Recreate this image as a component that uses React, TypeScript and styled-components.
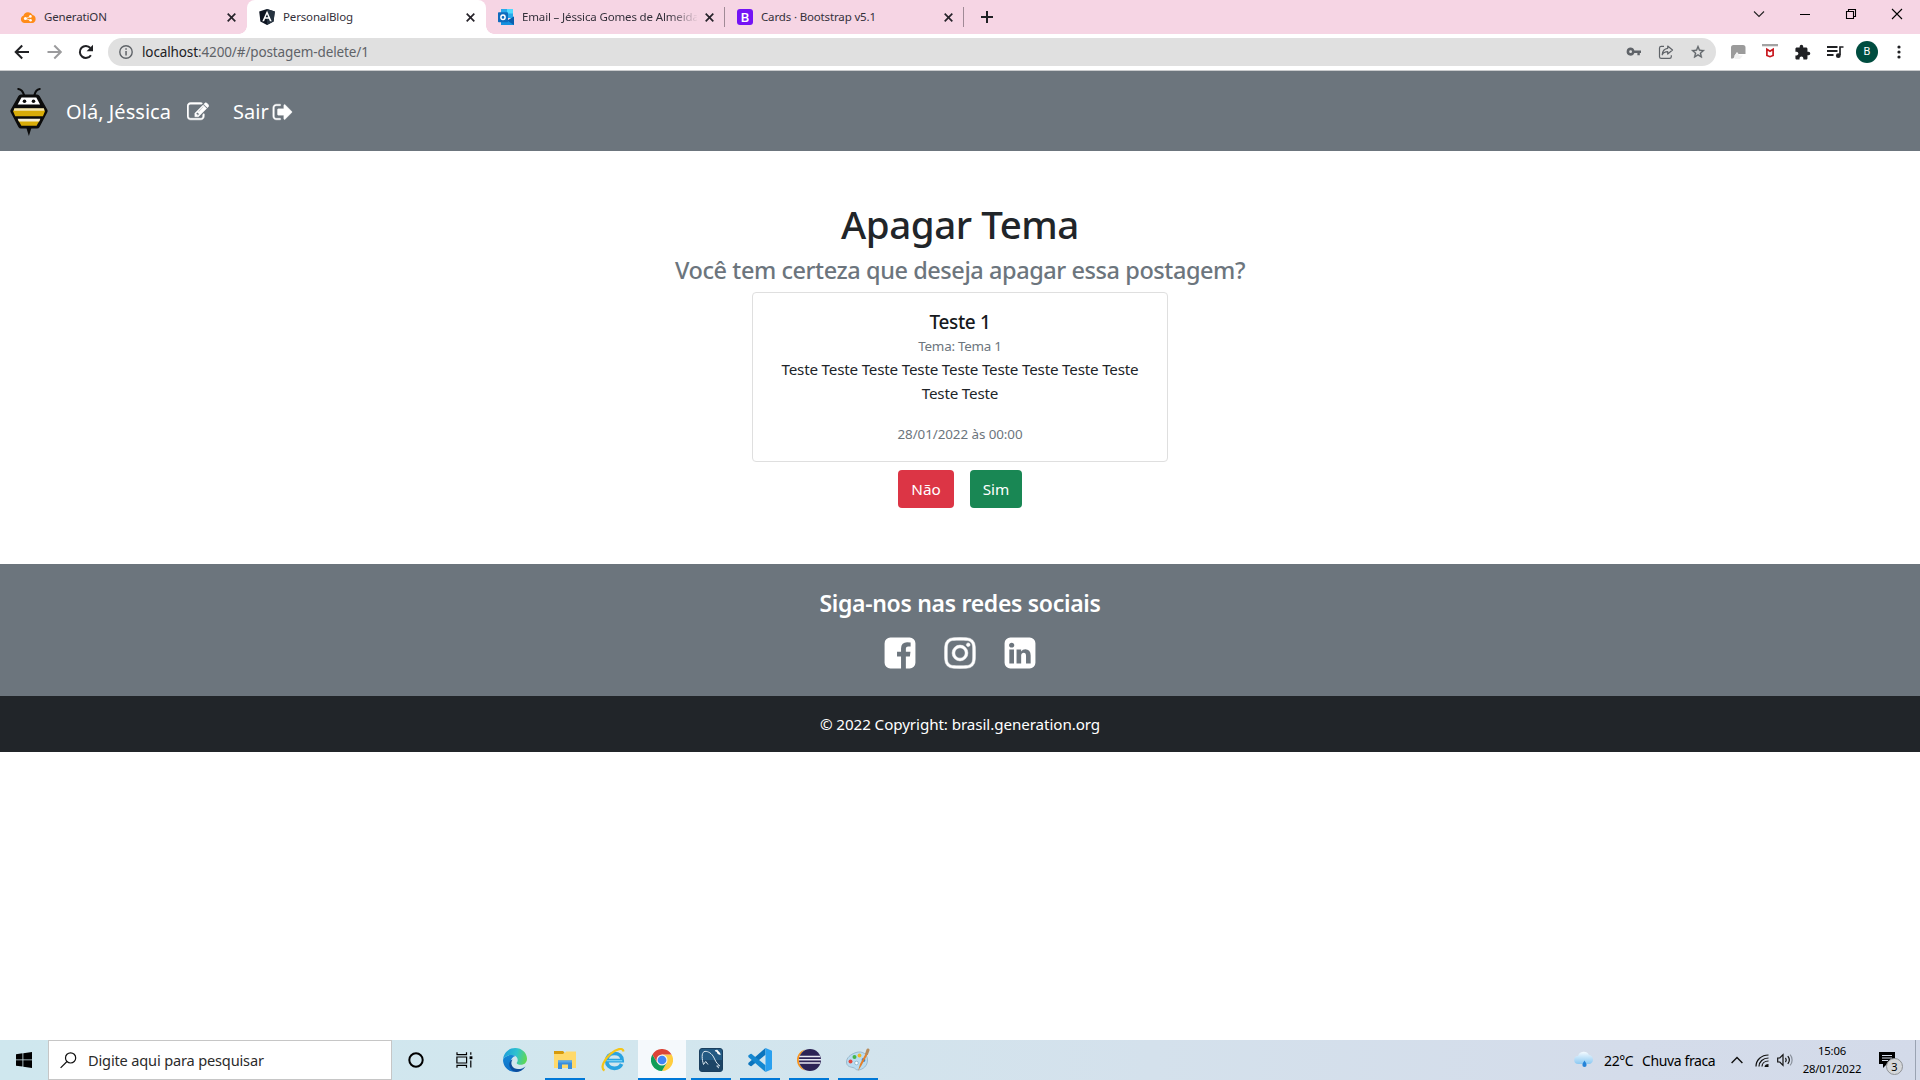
import React from "react";
import styled, { createGlobalStyle } from "styled-components";

const sans = `"Noto Sans", "Open Sans", "Liberation Sans", sans-serif`;

const GlobalStyle = createGlobalStyle`
  * { box-sizing: border-box; }
  html, body { margin: 0; padding: 0; }
  body { background: #fff; font-family: ${sans}; color: #212529; overflow: hidden; }
  h1, h2, h3, p { margin: 0; }
  svg { display: block; flex: none; }
`;

const Screen = styled.div`
  width: 1920px;
  height: 1080px;
  display: flex;
  flex-direction: column;
  background: #fff;
`;

/* ---------- browser chrome ---------- */

const TabStrip = styled.div`
  height: 34px;
  display: flex;
  background: #f6d5e4;
  padding-left: 8px;
`;

const Tab = styled.div<{ $active?: boolean; $divider?: boolean }>`
  position: relative;
  width: 239px;
  height: 34px;
  display: flex;
  align-items: center;
  padding: 0 11px 0 12px;
  background: ${(p) => (p.$active ? "#fff" : "transparent")};
  border-radius: 8px 8px 0 0;
  ${(p) =>
    p.$active &&
    `
    &::before, &::after {
      content: "";
      position: absolute;
      bottom: 0;
      width: 8px;
      height: 8px;
    }
    &::before { left: -8px; background: radial-gradient(circle at 0 0, transparent 7.5px, #fff 8px); }
    &::after { right: -8px; background: radial-gradient(circle at 100% 0, transparent 7.5px, #fff 8px); }
  `}
  ${(p) =>
    p.$divider &&
    `
    &::after {
      content: "";
      position: absolute;
      right: 0;
      top: 7px;
      width: 1px;
      height: 20px;
      background: #a08a96;
    }
  `}
`;

const TabTitle = styled.span<{ $fade?: boolean }>`
  flex: 1;
  margin-left: 8px;
  margin-right: 8px;
  font-size: 11.5px;
  line-height: 16px;
  letter-spacing: -0.15px;
  color: #33303a;
  white-space: nowrap;
  overflow: hidden;
  ${(p) => p.$fade && `mask-image: linear-gradient(90deg, #000 84%, transparent 101%);`}
`;

const NewTab = styled.div`
  padding: 11px 0 0 17px;
`;

const WindowControls = styled.div`
  margin-left: auto;
  display: flex;
  height: 28px;
  align-items: center;
  gap: 34px;
  padding-right: 17px;
`;

const Toolbar = styled.div`
  height: 37px;
  display: flex;
  align-items: center;
  padding-left: 12px;
  border-bottom: 1px solid #c9cbcd;
`;

const NavButtons = styled.div`
  width: 96px;
  display: flex;
  gap: 13px;
`;

const AddressBar = styled.div`
  width: 1608px;
  height: 28px;
  border-radius: 14px;
  background: #e0e0e0;
  display: flex;
  align-items: center;
  padding: 0 10px 0 11px;
`;

const Url = styled.span`
  flex: 1;
  margin-left: 9px;
  font-size: 13.5px;
  line-height: 20px;
  letter-spacing: -0.12px;
  color: #5f6368;
  b { font-weight: 400; color: #202124; }
`;

const PillIcons = styled.div`
  display: flex;
  align-items: center;
  gap: 16px;
`;

const Extensions = styled.div`
  display: flex;
  align-items: center;
  margin-left: 14px;
  gap: 16px;
`;

const Avatar = styled.div`
  width: 22px;
  height: 22px;
  border-radius: 50%;
  background: #004d40;
  color: #fff;
  font: 11px/22px Roboto, sans-serif;
  text-align: center;
  margin: 0 3px 0 -4px;
`;

/* ---------- blog page ---------- */

const Navbar = styled.header`
  height: 80px;
  background: #6c757d;
  display: flex;
  align-items: center;
  padding: 1px 0 0 10px;
  color: #fff;
`;

const NavLink = styled.span<{ $left: number; $width: number }>`
  margin-left: ${(p) => p.$left}px;
  width: ${(p) => p.$width}px;
  font-size: 20px;
  line-height: 30px;
  letter-spacing: 0.05px;
  white-space: nowrap;
`;

const NavIcon = styled.span<{ $left: number }>`
  margin-left: ${(p) => p.$left}px;
`;

const Main = styled.main`
  height: 413px;
  padding-top: 49px;
  display: flex;
  flex-direction: column;
  align-items: center;
  text-align: center;
`;

const Title = styled.h1`
  font-size: 38.5px;
  line-height: 48px;
  font-weight: 500;
  letter-spacing: -0.45px;
  margin-bottom: 5px;
`;

const Subtitle = styled.h2`
  font-size: 23.5px;
  line-height: 34px;
  font-weight: 500;
  letter-spacing: -0.43px;
  color: #6c757d;
  margin-bottom: 5px;
`;

const Card = styled.article`
  width: 416px;
  height: 170px;
  border: 1px solid #dfdfdf;
  border-radius: 4px;
  padding: 17px 16px 0;
`;

const CardTitle = styled.h3`
  font-size: 19px;
  line-height: 24px;
  font-weight: 500;
  letter-spacing: -0.35px;
  color: #16191d;
`;

const CardMeta = styled.p<{ $top?: number; $spacing: number }>`
  font-size: 13.4px;
  line-height: 24px;
  letter-spacing: ${(p) => p.$spacing}px;
  color: #6c757d;
  margin-top: ${(p) => p.$top ?? 0}px;
`;

const CardText = styled.p`
  font-size: 15.2px;
  line-height: 24px;
  letter-spacing: -0.19px;
  margin-top: -1px;
`;

const Actions = styled.div`
  display: flex;
  gap: 16px;
  margin-top: 8px;
`;

const Button = styled.button<{ $color: string; $width: number }>`
  width: ${(p) => p.$width}px;
  height: 38px;
  border: 0;
  border-radius: 4px;
  padding: 0;
  background: ${(p) => p.$color};
  color: #fff;
  font-family: inherit;
  font-size: 15.3px;
  line-height: 24px;
`;

const Social = styled.footer`
  height: 132px;
  background: #6c757d;
  color: #fff;
  display: flex;
  flex-direction: column;
  align-items: center;
  padding-top: 22px;
`;

const SocialTitle = styled.h3`
  font-size: 23px;
  line-height: 34px;
  font-weight: 600;
  letter-spacing: -0.3px;
`;

const SocialIcons = styled.div`
  display: flex;
  gap: 24px;
  margin-top: 15px;
`;

const Copyright = styled.div`
  height: 56px;
  background: #212529;
  color: #fff;
  font-size: 15.2px;
  line-height: 56px;
  letter-spacing: -0.08px;
  text-align: center;
`;

/* ---------- taskbar ---------- */

const Taskbar = styled.div`
  margin-top: auto;
  height: 40px;
  display: flex;
  background: linear-gradient(90deg, #cfe7ee 0%, #d2e6ee 35%, #d4e1ec 60%, #d4dcea 85%, #d3dae9 100%);
`;

const TaskCell = styled.div<{ $width: number; $line?: number; $active?: boolean }>`
  width: ${(p) => p.$width}px;
  height: 40px;
  display: flex;
  align-items: center;
  justify-content: center;
  background: ${(p) => (p.$active ? "#f5f9fc" : "transparent")};
  background-image: ${(p) => (p.$line ? "linear-gradient(#0078d7, #0078d7)" : "none")};
  background-size: ${(p) => p.$line ?? 0}px 2px;
  background-position: center bottom;
  background-repeat: no-repeat;
`;

const SearchBox = styled.div`
  width: 344px;
  height: 40px;
  background: #fff;
  border: 1px solid #c6c6c6;
  display: flex;
  align-items: center;
  padding-left: 11px;
  gap: 11px;
  font-size: 14.6px;
  letter-spacing: -0.17px;
  color: #2b2b2b;
`;

const Tray = styled.div`
  margin-left: auto;
  height: 40px;
  display: flex;
  align-items: center;
  color: #000;
`;

const TrayText = styled.span<{ $left: number; $width: number }>`
  margin-left: ${(p) => p.$left}px;
  width: ${(p) => p.$width}px;
  padding-top: 1px;
  font-size: 14px;
  line-height: 20px;
  letter-spacing: -0.38px;
  white-space: nowrap;
`;

const TrayIcon = styled.span<{ $left: number }>`
  margin-left: ${(p) => p.$left}px;
`;

const Clock = styled.div`
  margin-left: 6px;
  width: 64px;
  font-size: 11.3px;
  line-height: 18px;
  letter-spacing: -0.15px;
  text-align: center;
`;

const Notifications = styled.div`
  position: relative;
  margin-left: 15px;
  width: 36px;
`;

const Badge = styled.span`
  position: absolute;
  left: 7px;
  top: 6px;
  width: 17px;
  height: 17px;
  border-radius: 50%;
  border: 1px solid #8f9296;
  background: #d5d7da;
  font-size: 11px;
  line-height: 15px;
  text-align: center;
`;

const ShowDesktop = styled.span`
  width: 5px;
  height: 40px;
  border-left: 1px solid #9aa3b2;
`;

/* ---------- icons ---------- */

const CloseIcon = () => (
  <svg width="9" height="9" viewBox="0 0 9 9" stroke="#26232a" strokeWidth="1.7" fill="none">
    <path d="M.7.7l7.6 7.6M8.3.7L.7 8.3" />
  </svg>
);

const CloudIcon = () => (
  <svg width="16" height="16" viewBox="0 0 16 16">
    <path d="M4 14a3.8 3.8 0 0 1-.6-7.3A5 5 0 0 1 12.6 6 4.1 4.1 0 0 1 12.2 14z" fill="#ff8c1a" />
    <path d="M5.6 9.6l4.6-2M5.6 9.6l4.8 1.6" stroke="#ffe0bb" strokeWidth="1" />
    <circle cx="5.4" cy="9.6" r="1.5" fill="#fff" />
    <circle cx="10.4" cy="7.4" r="1.3" fill="#fff" />
    <circle cx="10.6" cy="11.3" r="1.2" fill="#fff" />
  </svg>
);

const AngularIcon = () => (
  <svg width="16" height="16" viewBox="0 0 16 16">
    <path d="M8 0l7.8 2.6-1.2 9.8L8 16l-6.6-3.6L.2 2.6z" fill="#0d1420" />
    <path d="M8 0l7.8 2.6-1.2 9.8L8 16z" fill="#263340" />
    <path d="M8 1.8L3.3 12.2h1.8l1-2.4h3.8l1 2.4h1.8zM8 5.2l1.3 3.1H6.7z" fill="#fff" fillRule="evenodd" />
  </svg>
);

const OutlookIcon = () => (
  <svg width="16" height="16" viewBox="0 0 16 16">
    <path d="M3 0h12v9H3z" fill="#28a8ea" />
    <path d="M9 0h6v4.5H9z" fill="#50d9ff" />
    <path d="M4 4h5.5v5H4z" fill="#0364b8" />
    <path d="M3 8.5l6.5 3L16 7.5V16H3z" fill="#1490df" />
    <path d="M16 7.5V16L9.5 11.6z" fill="#0a5fae" />
    <rect y="3.2" width="10" height="10" rx=".8" fill="#0f6cbd" />
    <ellipse cx="5" cy="8.2" rx="2.1" ry="2.3" fill="none" stroke="#fff" strokeWidth="1.5" />
  </svg>
);

const BootstrapBadge = styled.span`
  width: 16px;
  height: 16px;
  border-radius: 3px;
  background: #7413f5;
  color: #fff;
  font: 500 13.5px/16px Roboto, sans-serif;
  text-align: center;
`;

const ArrowIcon = ({ color, flip }: { color: string; flip?: boolean }) => (
  <svg width="20" height="16" viewBox="0 0 20 16" fill="none" stroke={color} strokeWidth="2">
    <path d={flip ? "M2.500 8h13M9.300 1.500L15.800 8l-6.500 6.500" : "M17 8H4M10.200 1.500L3.700 8l6.500 6.500"} />
  </svg>
);

const ReloadIcon = () => (
  <svg width="16" height="16" viewBox="0 0 16 16">
    <path d="M12.9 11.200A6 6 0 1 1 12.400 4" fill="none" stroke="#202124" strokeWidth="2" />
    <path d="M15 .8v6.400H8.600z" fill="#202124" />
  </svg>
);

const InfoIcon = () => (
  <svg width="14" height="14" viewBox="0 0 14 14">
    <circle cx="7" cy="7" r="6.200" fill="none" stroke="#5f6368" strokeWidth="1.400" />
    <path d="M6.300 3.200h1.500v1.500H6.300zM6.300 6h1.500v4.600H6.300z" fill="#5f6368" />
  </svg>
);

const KeyIcon = () => (
  <svg width="16" height="12" viewBox="0 0 16 12">
    <path
      d="M4.600 1.600a4 4 0 1 0 3.800 5.300h3v2.400h2.400V6.900H15V4.500H8.400a4 4 0 0 0-3.800-2.900zm0 2.700a1.400 1.400 0 1 1 0 2.800 1.400 1.400 0 0 1 0-2.800z"
      fill="#5f6368"
      fillRule="evenodd"
    />
  </svg>
);

const ShareIcon = () => (
  <svg width="16" height="16" viewBox="0 0 16 16" fill="none" stroke="#5f6368" strokeWidth="1.200">
    <path d="M6 2.400H3.200A1.700 1.700 0 0 0 1.500 4v8.800a1.700 1.700 0 0 0 1.700 1.600h8.400a1.700 1.700 0 0 0 1.700-1.600v-1.600" />
    <path d="M9.700 2l4.800 4-4.800 4V7.600C7 7.600 5.300 8.500 4.200 10.800 4.500 7 6.400 4.600 9.700 4.300z" strokeLinejoin="round" />
  </svg>
);

const StarIcon = () => (
  <svg width="16" height="16" viewBox="0 0 24 24">
    <path
      d="M22 9.240l-7.190-.620L12 2 9.190 8.630 2 9.240l5.460 4.730L5.820 21 12 17.270 18.180 21l-1.630-7.030L22 9.240zM12 15.400l-3.760 2.270 1-4.280-3.320-2.880 4.380-.380L12 6.100l1.710 4.040 4.380.380-3.320 2.880 1 4.280L12 15.400z"
      fill="#5f6368"
      stroke="#5f6368"
      strokeWidth=".5"
    />
  </svg>
);

const ReaderIcon = () => (
  <svg width="16" height="16" viewBox="0 0 16 16">
    <path d="M3.500 1H13a2.500 2.500 0 0 1 2.500 2.500V10H8.500L7 8l-2.500 3.500V13L3 14.500H1v-11A2.500 2.500 0 0 1 3.500 1z" fill="#9b9b9b" />
    <path d="M4.500 15v-3L7 8.500l2.500 3H13L10 15z" fill="#f1f1f1" />
  </svg>
);

const McAfeeIcon = () => (
  <svg width="16" height="16" viewBox="0 0 16 16">
    <path d="M0 0h16v2.300H0z" fill="#a2a2a2" />
    <path d="M4.900 5.300v6.200l3.100 1.200 3.100-1.200V5.300L8 7.300z" fill="none" stroke="#c8161d" strokeWidth="1.700" />
  </svg>
);

const PuzzleIcon = () => (
  <svg width="17" height="17" viewBox="0 0 24 24">
    <path
      d="M20.500 11H19V7c0-1.100-.9-2-2-2h-4V3.500a2.500 2.500 0 0 0-5 0V5H4c-1.100 0-1.990.9-1.990 2v3.800H3.500c1.490 0 2.700 1.210 2.700 2.700s-1.210 2.700-2.700 2.700H2V20c0 1.100.9 2 2 2h3.800v-1.500c0-1.490 1.210-2.700 2.700-2.700s2.700 1.210 2.700 2.700V22H17c1.100 0 2-.9 2-2v-4h1.500a2.500 2.500 0 0 0 0-5z"
      fill="#202124"
    />
  </svg>
);

const QueueIcon = () => (
  <svg width="17" height="16" viewBox="0 0 17 16">
    <path d="M0 3h10.500M0 7h10.500M0 11h6.500" stroke="#202124" strokeWidth="1.800" />
    <path d="M16.500 3H13v8" fill="none" stroke="#202124" strokeWidth="1.700" />
    <circle cx="11.300" cy="11.700" r="2.400" fill="#202124" />
  </svg>
);

const DotsIcon = () => (
  <svg width="4" height="14" viewBox="0 0 4 14" fill="#202124">
    <circle cx="2" cy="2" r="1.600" />
    <circle cx="2" cy="7" r="1.600" />
    <circle cx="2" cy="12" r="1.600" />
  </svg>
);

const BeeLogo = () => (
  <svg width="38" height="50" viewBox="0 0 38 50">
    <g fill="none" stroke="#0b0b0b" strokeWidth="2.200" strokeLinecap="round">
      <path d="M14 8C13 4.500 11.500 2.500 8.300 2M24.500 8c.8-3.500 2.200-5.500 5.200-6" />
    </g>
    <path d="M18.900 49l-2.800-9h5.600z" fill="#0b0b0b" />
    <path d="M11 7.500h16a3 3 0 0 1 2.600 1.500l7.600 13.500a3 3 0 0 1 0 3L29.600 40a3 3 0 0 1-2.600 1.500H11A3 3 0 0 1 8.400 40L.8 25.500a3 3 0 0 1 0-3L8.400 9A3 3 0 0 1 11 7.500z" fill="#0b0b0b" />
    <path d="M11.500 10.500h14.800l3.800 7H7.700z" fill="#fff" />
    <path d="M4.300 21.700h29.600l1 2.800-2 4.700H5.200l-2-4.700z" fill="#d9ac08" />
    <path d="M4.300 21.200h29.600l.5 2.500H3.700z" fill="#f3e6b0" />
    <path d="M7.700 32.300h22.600l-3.700 6.500H11.400z" fill="#d9ac08" />
    <path d="M7.700 31.800h22.600l-1.100 2.600H8.800z" fill="#f6efd5" />
    <circle cx="14.500" cy="14.200" r="1.800" fill="#0b0b0b" />
    <circle cx="23.500" cy="14.200" r="1.800" fill="#0b0b0b" />
  </svg>
);

const glyphs = {
  edit: "M888 1184l116-116-152-152-116 116v56h96v96h56zm440-720q-16-16-33 1l-350 350q-17 17-1 33t33-1l350-350q17-17 1-33zm80 594v190q0 119-84.500 203.500t-203.500 84.500h-832q-119 0-203.500-84.500t-84.500-203.500v-832q0-119 84.500-203.500t203.500-84.500h832q63 0 117 25 15 7 18 23 3 17-9 29l-49 49q-14 14-32 8-23-6-45-6h-832q-66 0-113 47t-47 113v832q0 66 47 113t113 47h832q66 0 113-47t47-113v-126q0-13 9-22l64-64q15-15 35-7t20 29zm-96-738l288 288-672 672h-288v-288zm444 132l-92 92-288-288 92-92q28-28 68-28t68 28l152 152q28 28 28 68t-28 68z",
  signOut:
    "M704 1440q0 4 1 20t.5 26.500-3 23.500-10 19.500-20.500 6.500h-320q-119 0-203.500-84.500t-84.500-203.500v-704q0-119 84.500-203.500t203.500-84.500h320q13 0 22.500 9.500t9.500 22.500q0 4 1 20t.5 26.500-3 23.500-10 19.500-20.500 6.500h-320q-66 0-113 47t-47 113v704q0 66 47 113t113 47h312l11.500 1 11.500 3 8 5.500 7 9 2 13.500zm928-544q0 26-19 45l-544 544q-19 19-45 19t-45-19-19-45v-288h-448q-26 0-45-19t-19-45v-384q0-26 19-45t45-19h448v-288q0-26 19-45t45-19 45 19l544 544q19 19 19 45z",
  facebook:
    "M1376 128q119 0 203.500 84.500t84.500 203.500v960q0 119-84.500 203.500t-203.500 84.500h-188v-595h199l30-232h-229v-148q0-56 23.500-84t91.500-28l122-1v-207q-63-9-178-9-136 0-217.500 80.500t-81.500 226.500v171h-200v232h200v595h-532q-119 0-203.500-84.500t-84.500-203.500v-960q0-119 84.500-203.500t203.500-84.500h960z",
  instagram:
    "M1152 896q0-106-75-181t-181-75-181 75-75 181 75 181 181 75 181-75 75-181zm138 0q0 164-115 279t-279 115-279-115-115-279 115-279 279-115 279 115 115 279zm108-410q0 38-27 65t-65 27-65-27-27-65 27-65 65-27 65 27 27 65zm-502-220q-7 0-76.500-.5t-105.500 0-96.500 3-103 10-71.500 18.500q-50 20-88 58t-58 88q-11 29-18.500 71.500t-10 103-3 96.500 0 105.500.5 76.500-.5 76.500 0 105.500 3 96.500 10 103 18.500 71.500q20 50 58 88t88 58q29 11 71.500 18.500t103 10 96.500 3 105.500 0 76.500-.5 76.500.5 105.500 0 96.500-3 103-10 71.500-18.500q50-20 88-58t58-88q11-29 18.500-71.500t10-103 3-96.500 0-105.500-.5-76.500.5-76.500 0-105.500-3-96.500-10-103-18.500-71.500q-20-50-58-88t-88-58q-29-11-71.500-18.500t-103-10-96.500-3-105.500 0-76.500.5zm768 630q0 229-5 317-10 208-124 322t-322 124q-88 5-317 5t-317-5q-208-10-322-124t-124-322q-5-88-5-317t5-317q10-208 124-322t322-124q88-5 317-5t317 5q208 10 322 124t124 322q5 88 5 317z",
  linkedin:
    "M365 1414h231v-694h-231v694zm246-908q-1-52-36-86t-93-34-94.500 34-36.500 86q0 51 35.500 85.500t92.500 34.500h1q59 0 95-34.500t36-85.500zm585 908h231v-398q0-154-73-233t-193-79q-136 0-209 117h2v-101h-231q3 66 0 694h231v-388q0-38 7-56 15-35 45-59.500t74-24.500q116 0 116 157v371zm468-998v960q0 119-84.500 203.500t-203.500 84.500h-960q-119 0-203.500-84.500t-84.500-203.500v-960q0-119 84.500-203.500t203.500-84.500h960q119 0 203.500 84.500t84.500 203.500z",
};

const Glyph = ({ name, size, weight = 0 }: { name: keyof typeof glyphs; size: number; weight?: number }) => (
  <svg width={size} height={size} viewBox="0 0 1792 1792" fill="#fff" stroke="#fff" strokeWidth={weight}>
    <path d={glyphs[name]} />
  </svg>
);

const WindowsIcon = () => (
  <svg width="16" height="16" viewBox="0 0 16 16" fill="#000">
    <path d="M0 2.200l6.500-.9v6.200H0zM7.300 1.200L16 0v7.500H7.300zM0 8.300h6.500v6.300L0 13.700zM7.300 8.300H16V16l-8.700-1.200z" />
  </svg>
);

const SearchIcon = () => (
  <svg width="17" height="17" viewBox="0 0 17 17" fill="none" stroke="#111" strokeWidth="1.200">
    <circle cx="10.600" cy="5.900" r="5.100" />
    <path d="M7 9.500L.6 15.900" />
  </svg>
);

const TaskViewIcon = () => (
  <svg width="17" height="16" viewBox="0 0 17 16" fill="none" stroke="#000" strokeWidth="1.200">
    <path d="M1 .3v2.300h9.500V.3M1 15.700v-2.300h9.500v2.300M.9 5h9.700v6H.9zM14.800.3v2.500M14.800 8.500v7" />
    <rect x="13.600" y="4.300" width="2.800" height="2.800" fill="#000" stroke="none" />
  </svg>
);

const EdgeIcon = () => (
  <svg width="24" height="24" viewBox="0 0 24 24">
    <defs>
      <linearGradient id="edgeTop" x1="0" x2="1" y1=".3" y2=".5">
        <stop offset="0" stopColor="#1d9ddb" />
        <stop offset=".55" stopColor="#2fc3cf" />
        <stop offset="1" stopColor="#5fd854" />
      </linearGradient>
      <linearGradient id="edgeSide" x1="0" x2="0" y1="0" y2="1">
        <stop offset="0" stopColor="#1488d6" />
        <stop offset="1" stopColor="#0f6fc6" />
      </linearGradient>
    </defs>
    <path d="M0 11.500C.6 4.800 5.700 0 12.200 0 19 0 24 5 24 10.800c0 3.900-2.800 6-6 6-2.600 0-4.300-.9-4.300-1.900 0-.7 1-1.200 1-3 0-2.500-2.500-4.800-6-4.800C4.500 7.100 1.300 9 0 11.500z" fill="url(#edgeTop)" />
    <path d="M0 11.800c1.300-3.200 4.700-4.700 8.700-4.700 1.500 0 2.800.4 3.800 1-3 .6-4.700 3.200-4.700 6.100 0 4.500 3.300 8.300 7.600 9.200C7.500 25.500 0 20 0 11.800z" fill="url(#edgeSide)" />
    <path d="M9.500 11.500c-3 4.500.2 9.500 5.500 9.500 3.200 0 5.600-1 7.500-2.600C20 22.300 16.400 24 13 24c-4-.8-6.700-4-6.700-7.700 0-2 1.200-4 3.200-4.800z" fill="#0c4e9e" />
  </svg>
);

const ExplorerIcon = () => (
  <svg width="22" height="20" viewBox="0 0 22 20">
    <path d="M0 3h11l1-1.500h10V18H0z" fill="#ffd96a" />
    <path d="M0 1h9l1.500 1.500L9 4H0z" fill="#d69a0c" />
    <path d="M4 10.500h14V19h-4v-4.500H8V19H4z" fill="#3a8ddb" />
    <path d="M4 10.500h14v2H4z" fill="#58a8ea" />
  </svg>
);

const ExplorerEIcon = () => (
  <svg width="24" height="24" viewBox="0 0 24 24" fill="none">
    <path d="M5.500 12.700h15.700c0-4.300-3.200-7.200-7.800-7.200s-7.700 3.200-7.700 7.500 3.200 7.300 7.700 7.300c3.500 0 6-1.600 7.200-4.300" stroke="#2aa3e0" strokeWidth="3.700" />
    <path d="M5.500 12.700h15.700" stroke="#7fd4f5" strokeWidth="1.200" />
    <path d="M3.500 22.500C-1 20 3 11.500 9.500 5.800 15.500.8 22-.8 22.500 3.500" stroke="#f5c518" strokeWidth="2.200" />
  </svg>
);

const ChromeIcon = () => (
  <svg width="22" height="22" viewBox="0 0 48 48">
    <path d="M24 12h20.800A24 24 0 0 1 24 48l10.400-18z" fill="#ffcd40" />
    <path d="M3.200 12A24 24 0 0 0 24 48l10.400-18-10.400 5-10.400-5z" fill="#0f9d58" />
    <path d="M24 12h20.800A24 24 0 0 0 3.200 12l10.400 18z" fill="#db4437" />
    <circle cx="24" cy="24" r="12" fill="#f1f1f1" />
    <circle cx="24" cy="24" r="9.500" fill="#4285f4" />
  </svg>
);

const MySqlIcon = () => (
  <svg width="24" height="24" viewBox="0 0 24 24">
    <rect x=".5" y=".5" width="23" height="23" rx="2.500" fill="#235a83" stroke="#1b3f5e" />
    <path d="M1 12h22v9.500a1.500 1.500 0 0 1-1.500 1.500h-19A1.500 1.500 0 0 1 1 21.500z" fill="#1d4465" />
    <path d="M4.500 16.500C2.800 11 2.500 5 5 3.700c2.600-1.200 6.800 1 9 4.300 1.800 2.900 2.300 5.200 4.200 7.500 1 .8 2.200 1.500 2.500 2.300l-3 .3 2.300 2M4.500 16.500l2.200-3 2.300 3" fill="none" stroke="#dbe7ef" strokeWidth="1" />
    <path d="M16 2.500l2 .8 1.200 2.200 2.300 1M17.500 2l3.500 4" stroke="#fff" strokeWidth="1.300" fill="none" />
  </svg>
);

const VsCodeIcon = () => (
  <svg width="24" height="24" viewBox="0 0 24 24">
    <path d="M17.500 0v6.800L3.300 18.200l-1-.1L.3 16.400v-1.300z" fill="#0b74bd" />
    <path d="M17.500 24v-6.800L3.300 5.800l-1 .1L.3 7.600v1.300z" fill="#1487d0" />
    <path d="M17.500 0L24 2.800v18.400L17.500 24z" fill="#2aa0ef" />
  </svg>
);

const EclipseIcon = () => (
  <svg width="24" height="24" viewBox="0 0 24 24">
    <path d="M8 1.500C3 3 0 7.200 0 12s3 9 8 10.500C4 19.500 2.500 16 2.500 12S4 4.500 8 1.500z" fill="#f7941e" />
    <circle cx="13" cy="12" r="11" fill="#2c2255" />
    <path d="M2.200 8.500h21M1.800 11.700H24M2.200 14.900h21" stroke="#e8e6f1" strokeWidth="1.500" />
  </svg>
);

const PaintIcon = () => (
  <svg width="24" height="24" viewBox="0 0 24 24">
    <path d="M10 4.500C16 2.500 21.500 6 21.500 12c0 6-4.500 9.500-9 10-3 .3-3-2-5.500-2.500C3.500 19 .5 18 .5 14S4 6.500 10 4.500z" fill="#b9dcf0" stroke="#8aa9bd" strokeWidth=".7" />
    <circle cx="4.500" cy="13.500" r="2" fill="#e2483d" />
    <circle cx="8.500" cy="9" r="2" fill="#43b649" />
    <circle cx="13.500" cy="7.500" r="1.900" fill="#f2b824" />
    <circle cx="17.500" cy="12" r="1.900" fill="#357fd0" />
    <circle cx="10.500" cy="15" r="1.800" fill="#fff" stroke="#7fa7bf" strokeWidth=".7" />
    <path d="M12 23l2-7L20 5l1.800 1-6 11z" fill="#e2812c" />
    <path d="M19 6l1.500-4.500c.6-1.700 3.300-1 3 .8L21.800 7z" fill="#b58b5c" />
  </svg>
);

const RainIcon = () => (
  <svg width="22" height="18" viewBox="0 0 22 18">
    <defs>
      <linearGradient id="cloud" x1="0" x2="0" y1="0" y2="1">
        <stop offset="0" stopColor="#f3faff" />
        <stop offset="1" stopColor="#8cc9f2" />
      </linearGradient>
    </defs>
    <path d="M5.500 13a4 4 0 0 1-.5-8 6 6 0 0 1 11-1 4.700 4.700 0 0 1 1 9z" fill="url(#cloud)" />
    <path d="M11.500 9.500c1 1.800 2.100 3 2.100 4.500a2.100 2.100 0 0 1-4.200 0c0-1.500 1.100-2.700 2.100-4.500z" fill="#2583d8" />
  </svg>
);

const WifiIcon = () => (
  <svg width="15" height="15" viewBox="0 0 15 15" fill="none" stroke="#111" strokeWidth="1.200">
    <path d="M1 13.500C1 7 6.500 2 13.500 2M4 13.500C4 9 8 5 13.500 5M7 13.500c0-3 2.500-5.500 6.500-5.500" />
    <path d="M13.500 11v3h-4c0-1.800 1.800-3 4-3z" fill="#111" stroke="none" />
  </svg>
);

const SpeakerIcon = () => (
  <svg width="17" height="14" viewBox="0 0 17 14" fill="none" stroke="#111" strokeWidth="1.200">
    <path d="M.7 5v4h2.100L6 12.300V1.700L2.800 5z" />
    <path d="M8.500 4.800c.9 1.300.9 3.100 0 4.400M10.800 3.200c1.800 2.200 1.800 5.400 0 7.600" />
    <path d="M13.100 1.600c2.700 3 2.700 7.800 0 10.800" stroke="#8a919c" />
  </svg>
);

const apps = [
  { icon: <EdgeIcon />, width: 54 },
  { icon: <ExplorerIcon />, width: 46, line: 40 },
  { icon: <ExplorerEIcon />, width: 50 },
  { icon: <ChromeIcon />, width: 48, line: 48, active: true },
  { icon: <MySqlIcon />, width: 50, line: 40 },
  { icon: <VsCodeIcon />, width: 48, line: 40 },
  { icon: <EclipseIcon />, width: 50, line: 40 },
  { icon: <PaintIcon />, width: 48, line: 40 },
];

export default function App() {
  return (
    <Screen>
      <GlobalStyle />

      <TabStrip>
        <Tab>
          <CloudIcon />
          <TabTitle>GeneratiON</TabTitle>
          <CloseIcon />
        </Tab>
        <Tab $active>
          <AngularIcon />
          <TabTitle>PersonalBlog</TabTitle>
          <CloseIcon />
        </Tab>
        <Tab $divider>
          <OutlookIcon />
          <TabTitle $fade>Email – Jéssica Gomes de Almeida</TabTitle>
          <CloseIcon />
        </Tab>
        <Tab $divider>
          <BootstrapBadge>B</BootstrapBadge>
          <TabTitle>Cards · Bootstrap v5.1</TabTitle>
          <CloseIcon />
        </Tab>
        <NewTab>
          <svg width="12" height="12" viewBox="0 0 12 12" stroke="#202124" strokeWidth="2">
            <path d="M6 0v12M0 6h12" />
          </svg>
        </NewTab>
        <WindowControls>
          <svg width="12" height="12" viewBox="0 0 12 12" fill="none" stroke="#222" strokeWidth="1.100">
            <path d="M1 3.500l5 5 5-5" />
          </svg>
          <svg width="12" height="12" viewBox="0 0 12 12" fill="none" stroke="#000">
            <path d="M1 6.500h10" />
          </svg>
          <svg width="12" height="12" viewBox="0 0 12 12" fill="none" stroke="#000" strokeWidth="1.100">
            <path d="M1.500 3.500h7v7h-7zM3.500 3.500v-2h7v7h-2" />
          </svg>
          <svg width="12" height="12" viewBox="0 0 12 12" fill="none" stroke="#000" strokeWidth="1.100">
            <path d="M1 1l10 10M11 1L1 11" />
          </svg>
        </WindowControls>
      </TabStrip>

      <Toolbar>
        <NavButtons>
          <ArrowIcon color="#202124" />
          <ArrowIcon color="#9b9b9d" flip />
          <ReloadIcon />
        </NavButtons>
        <AddressBar>
          <InfoIcon />
          <Url>
            <b>localhost</b>:4200/#/postagem-delete/1
          </Url>
          <PillIcons>
            <KeyIcon />
            <ShareIcon />
            <StarIcon />
          </PillIcons>
        </AddressBar>
        <Extensions>
          <ReaderIcon />
          <McAfeeIcon />
          <PuzzleIcon />
          <QueueIcon />
          <Avatar>B</Avatar>
          <DotsIcon />
        </Extensions>
      </Toolbar>

      <Navbar>
        <BeeLogo />
        <NavLink $left={18} $width={105}>Olá, Jéssica</NavLink>
        <NavIcon $left={16}><Glyph name="edit" size={22} weight={40} /></NavIcon>
        <NavLink $left={24} $width={34}>Sair</NavLink>
        <NavIcon $left={5}><Glyph name="signOut" size={22} weight={30} /></NavIcon>
      </Navbar>

      <Main>
        <Title>Apagar Tema</Title>
        <Subtitle>Você tem certeza que deseja apagar essa postagem?</Subtitle>
        <Card>
          <CardTitle>Teste 1</CardTitle>
          <CardMeta $spacing={-0.25}>Tema: Tema 1</CardMeta>
          <CardText>
            Teste Teste Teste Teste Teste Teste Teste Teste Teste
            <br />
            Teste Teste
          </CardText>
          <CardMeta $top={17} $spacing={-0.07}>28/01/2022 às 00:00</CardMeta>
        </Card>
        <Actions>
          <Button $color="#dc3545" $width={56}>Não</Button>
          <Button $color="#198754" $width={52}>Sim</Button>
        </Actions>
      </Main>

      <Social>
        <SocialTitle>Siga-nos nas redes sociais</SocialTitle>
        <SocialIcons>
          <Glyph name="facebook" size={36} />
          <Glyph name="instagram" size={36} weight={25} />
          <Glyph name="linkedin" size={36} />
        </SocialIcons>
      </Social>
      <Copyright>© 2022 Copyright: brasil.generation.org</Copyright>

      <Taskbar>
        <TaskCell $width={48}><WindowsIcon /></TaskCell>
        <SearchBox>
          <SearchIcon />
          Digite aqui para pesquisar
        </SearchBox>
        <TaskCell $width={48}>
          <svg width="16" height="16" viewBox="0 0 16 16">
            <circle cx="8" cy="8" r="6.700" fill="none" stroke="#000" strokeWidth="2" />
          </svg>
        </TaskCell>
        <TaskCell $width={48}><TaskViewIcon /></TaskCell>
        {apps.map((app, i) => (
          <TaskCell key={i} $width={app.width} $line={app.line} $active={app.active}>
            {app.icon}
          </TaskCell>
        ))}
        <Tray>
          <RainIcon />
          <TrayText $left={9} $width={30}>22°C</TrayText>
          <TrayText $left={8} $width={73}>Chuva fraca</TrayText>
          <TrayIcon $left={16}>
            <svg width="12" height="8" viewBox="0 0 12 8" fill="none" stroke="#111" strokeWidth="1.400">
              <path d="M.6 7L6 1.600 11.400 7" />
            </svg>
          </TrayIcon>
          <TrayIcon $left={12}><WifiIcon /></TrayIcon>
          <TrayIcon $left={7}><SpeakerIcon /></TrayIcon>
          <Clock>
            15:06
            <br />
            28/01/2022
          </Clock>
          <Notifications>
            <svg width="16" height="16" viewBox="0 0 16 16">
              <path d="M0 0h16v12H8l-4 4v-4H0z" fill="#000" />
              <path d="M3 3.500h10M3 6h10M3 8.500h6" stroke="#d5dcea" strokeWidth="1" />
            </svg>
            <Badge>3</Badge>
          </Notifications>
          <ShowDesktop />
        </Tray>
      </Taskbar>
    </Screen>
  );
}
